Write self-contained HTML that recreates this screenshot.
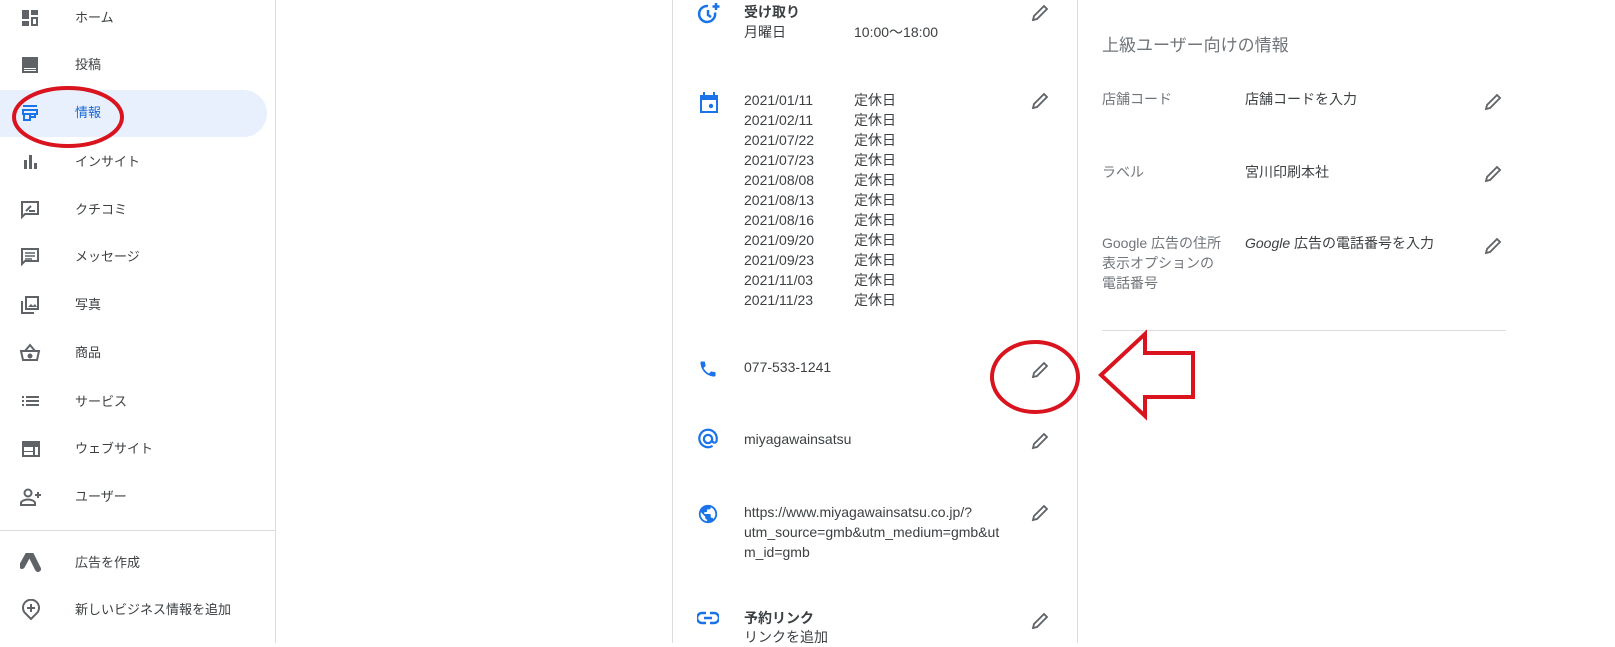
<!DOCTYPE html>
<html><head><meta charset="utf-8"><style>
body{margin:0;width:1615px;height:643px;overflow:hidden;background:#fff;font-family:"Liberation Sans","Noto Sans CJK JP",sans-serif;color:#3c4043;position:relative}
.a{position:absolute;white-space:nowrap}
.nav{font-size:13px;color:#3c4043;left:75px;line-height:16px}
.ic{position:absolute}
.t{font-size:14px;color:#3c4043;line-height:20px}
.g{color:#70757a}
</style></head><body>
<!-- sidebar -->
<div class="a" style="left:0;top:90px;width:267px;height:47px;background:#e8f0fe;border-radius:0 24px 24px 0"></div>
<div class="a" style="left:275px;top:0;width:1px;height:643px;background:#dadce0"></div>
<div class="a" style="left:0;top:530px;width:275px;height:1px;background:#dadce0"></div>

<svg class="ic" style="left:21px;top:9px" width="18" height="18" viewBox="0 0 18 18" fill="#5f6368"><rect x="1" y="1" width="7" height="9"/><rect x="10" y="1" width="7" height="5"/><rect x="1" y="12" width="7" height="5"/><path d="M10 8h7v9h-7zM12 10v5h3v-5z" fill-rule="evenodd"/></svg>
<div class="a nav" style="top:10px">ホーム</div>
<svg class="ic" style="left:21px;top:56px" width="18" height="18" viewBox="0 0 18 18" fill="#5f6368"><path d="M1 1h16v16H1z M3 12v1h12v-1z M3 14v1h12v-1z" fill-rule="evenodd"/></svg>
<div class="a nav" style="top:57px">投稿</div>
<svg class="ic" style="left:21px;top:104px" width="18" height="18" viewBox="0 0 18 18" fill="none" stroke="#1a73e8" stroke-width="2"><path d="M2 2h14M2 6h14v4H2zM3 10v6h6v-6M9 13h5v-3"/></svg>
<div class="a nav" style="top:105px;color:#1967d2">情報</div>
<svg class="ic" style="left:23px;top:154px" width="16" height="16" viewBox="0 0 16 16" fill="#5f6368"><rect x="1" y="6" width="3" height="9"/><rect x="6" y="1" width="3" height="14"/><rect x="11" y="9" width="3" height="6"/></svg>
<div class="a nav" style="top:154px">インサイト</div>
<svg class="ic" style="left:20px;top:200px" width="20" height="20" viewBox="0 0 20 20" fill="none" stroke="#5f6368" stroke-width="2"><path d="M2 2h16v12H5l-3 3z"/><path d="M6 11l5-5M9 11h6" /></svg>
<div class="a nav" style="top:202px">クチコミ</div>
<svg class="ic" style="left:20px;top:247px" width="20" height="20" viewBox="0 0 20 20" fill="none" stroke="#5f6368" stroke-width="2"><path d="M2 2h16v12H5l-3 3z"/><path d="M5 6h10M5 9h10M5 12h7" stroke-width="1.5"/></svg>
<div class="a nav" style="top:249px">メッセージ</div>
<svg class="ic" style="left:20px;top:295px" width="20" height="20" viewBox="0 0 20 20" fill="none" stroke="#5f6368" stroke-width="2"><path d="M6 2h12v12H6zM2 6v12h12"/><path d="M8 12l3-3 2 2 2-2 2 3z" fill="#5f6368" stroke="none"/></svg>
<div class="a nav" style="top:297px">写真</div>
<svg class="ic" style="left:19px;top:343px" width="22" height="20" viewBox="0 0 22 20" fill="none" stroke="#5f6368" stroke-width="2"><path d="M6 8l5-6 5 6M2 8h18l-2 9H4z"/><circle cx="11" cy="13" r="1.5" fill="#5f6368"/></svg>
<div class="a nav" style="top:345px">商品</div>
<svg class="ic" style="left:21px;top:393px" width="20" height="16" viewBox="0 0 20 16" fill="#5f6368"><rect x="1" y="3" width="2" height="2"/><rect x="5" y="3" width="13" height="2"/><rect x="1" y="7" width="2" height="2"/><rect x="5" y="7" width="13" height="2"/><rect x="1" y="11" width="2" height="2"/><rect x="5" y="11" width="13" height="2"/></svg>
<div class="a nav" style="top:394px">サービス</div>
<svg class="ic" style="left:21px;top:440px" width="20" height="18" viewBox="0 0 20 18" fill="#5f6368"><path d="M1 1h18v16H1z M3 7v8h9V7z M14 7v8h3V7z M3 11h9v1H3z" fill-rule="evenodd"/></svg>
<div class="a nav" style="top:441px">ウェブサイト</div>
<svg class="ic" style="left:19px;top:487px" width="24" height="20" viewBox="0 0 24 20" fill="none" stroke="#5f6368" stroke-width="2"><circle cx="9" cy="6" r="3.5"/><path d="M2 18v-2c0-2 4-3.5 7-3.5s7 1.5 7 3.5v2z"/><path d="M19 5v6M16 8h6"/></svg>
<div class="a nav" style="top:489px">ユーザー</div>
<svg class="ic" style="left:20px;top:553px" width="22" height="20" viewBox="0 0 22 20"><path d="M8 2l-6 11" stroke="#5f6368" stroke-width="6" stroke-linecap="round"/><path d="M11 2l7 14" stroke="#5f6368" stroke-width="6" stroke-linecap="round"/></svg>
<div class="a nav" style="top:555px">広告を作成</div>
<svg class="ic" style="left:21px;top:599px" width="20" height="22" viewBox="0 0 20 22" fill="none" stroke="#5f6368" stroke-width="2"><path d="M10 20l-6-6a8 8 0 1 1 12 0z"/><path d="M10 5v8M6 9h8"/></svg>
<div class="a nav" style="top:602px">新しいビジネス情報を追加</div>
<svg class="a" style="left:8px;top:82px" width="120" height="70"><ellipse cx="60" cy="35" rx="54" ry="29" fill="none" stroke="#d9141e" stroke-width="4"/></svg>

<!-- center card -->
<div class="a" style="left:672px;top:0;width:1px;height:643px;background:#dadce0"></div>
<div class="a" style="left:1077px;top:0;width:1px;height:643px;background:#dadce0"></div>

<svg class="ic" style="left:697px;top:2px" width="24" height="24" viewBox="0 0 24 24" fill="none" stroke="#1a73e8" stroke-width="2.5"><path d="M18 10.5A8 8 0 1 1 11 4"/><path d="M11 8v5l3 2"/><path d="M19 1v7M15.5 4.5h7"/></svg>
<div class="a t" style="left:744px;top:2px;font-weight:bold">受け取り</div>
<div class="a t" style="left:744px;top:22px">月曜日</div>
<div class="a t" style="left:854px;top:22px">10:00～18:00</div>

<svg class="ic" style="left:699px;top:92px" width="20" height="22" viewBox="0 0 20 22" fill="#1a73e8"><path d="M4 0h2v3H4zM14 0h2v3h-2zM1 3h18v18H1z M3 8v11h14V8z" fill-rule="evenodd"/><circle cx="12" cy="14" r="2.2"/></svg>
<div class="a t" style="left:744px;top:90px">2021/01/11<br>2021/02/11<br>2021/07/22<br>2021/07/23<br>2021/08/08<br>2021/08/13<br>2021/08/16<br>2021/09/20<br>2021/09/23<br>2021/11/03<br>2021/11/23</div>
<div class="a t" style="left:854px;top:90px">定休日<br>定休日<br>定休日<br>定休日<br>定休日<br>定休日<br>定休日<br>定休日<br>定休日<br>定休日<br>定休日</div>

<svg class="ic" style="left:698px;top:359px" width="20" height="20" viewBox="0 0 24 24" fill="#1a73e8"><path d="M6.6 10.8c1.4 2.8 3.8 5.1 6.6 6.6l2.2-2.2c.3-.3.7-.4 1-.2 1.1.4 2.3.6 3.6.6.6 0 1 .4 1 1V20c0 .6-.4 1-1 1C10.6 21 3 13.4 3 4c0-.6.4-1 1-1h3.5c.6 0 1 .4 1 1 0 1.3.2 2.5.6 3.6.1.3 0 .7-.2 1z"/></svg>
<div class="a t" style="left:744px;top:357px">077-533-1241</div>

<svg class="ic" style="left:697px;top:428px" width="22" height="22" viewBox="0 0 24 24" fill="none" stroke="#1a73e8" stroke-width="2.4"><path d="M17 19.5A9.5 9.5 0 1 1 21.5 12v1.5a2.5 2.5 0 0 1-5 0V12"/><circle cx="12" cy="12" r="4.5"/></svg>
<div class="a t" style="left:744px;top:429px">miyagawainsatsu</div>

<svg class="ic" style="left:697px;top:503px" width="22" height="22" viewBox="0 0 24 24" fill="#1a73e8"><path d="M12 2a10 10 0 1 0 0 20 10 10 0 0 0 0-20zM11 19.9A8 8 0 0 1 4.2 10L9 15v1a2 2 0 0 0 2 2zm6.9-2.5A2 2 0 0 0 16 16h-1v-3a1 1 0 0 0-1-1H8v-2h2a1 1 0 0 0 1-1V7h2a2 2 0 0 0 2-2v-.4a8 8 0 0 1 2.9 12.8z"/></svg>
<div class="a t" style="left:744px;top:502px">https://www.miyagawainsatsu.co.jp/?<br>utm_source=gmb&amp;utm_medium=gmb&amp;ut<br>m_id=gmb</div>

<svg class="ic" style="left:697px;top:611px" width="22" height="14" viewBox="0 0 22 14" fill="none" stroke="#1a73e8" stroke-width="2.4"><path d="M9 2H5a5 5 0 0 0 0 10h4M13 2h4a5 5 0 0 1 0 10h-4M7 7h8"/></svg>
<div class="a t" style="left:744px;top:608px;font-weight:bold">予約リンク</div>
<div class="a t" style="left:744px;top:627px">リンクを追加</div>

<!-- pencils center -->
<svg class="ic" style="left:1031px;top:4px" width="18" height="18" viewBox="0 0 18 18" fill="none" stroke="#5f6368" stroke-width="1.8"><path d="M2 16l1-4L13 2l3 3L6 15z"/></svg>
<svg class="ic" style="left:1031px;top:92px" width="18" height="18" viewBox="0 0 18 18" fill="none" stroke="#5f6368" stroke-width="1.8"><path d="M2 16l1-4L13 2l3 3L6 15z"/></svg>
<svg class="ic" style="left:1031px;top:361px" width="18" height="18" viewBox="0 0 18 18" fill="none" stroke="#5f6368" stroke-width="1.8"><path d="M2 16l1-4L13 2l3 3L6 15z"/></svg>
<svg class="ic" style="left:1031px;top:432px" width="18" height="18" viewBox="0 0 18 18" fill="none" stroke="#5f6368" stroke-width="1.8"><path d="M2 16l1-4L13 2l3 3L6 15z"/></svg>
<svg class="ic" style="left:1031px;top:504px" width="18" height="18" viewBox="0 0 18 18" fill="none" stroke="#5f6368" stroke-width="1.8"><path d="M2 16l1-4L13 2l3 3L6 15z"/></svg>
<svg class="ic" style="left:1031px;top:612px" width="18" height="18" viewBox="0 0 18 18" fill="none" stroke="#5f6368" stroke-width="1.8"><path d="M2 16l1-4L13 2l3 3L6 15z"/></svg>

<!-- right panel -->
<div class="a g" style="left:1102px;top:31px;font-size:17px">上級ユーザー向けの情報</div>
<div class="a t g" style="left:1102px;top:89px">店舗コード</div>
<div class="a t" style="left:1245px;top:89px">店舗コードを入力</div>
<div class="a t g" style="left:1102px;top:162px">ラベル</div>
<div class="a t" style="left:1245px;top:162px">宮川印刷本社</div>
<div class="a t g" style="left:1102px;top:233px">Google 広告の住所<br>表示オプションの<br>電話番号</div>
<div class="a t" style="left:1245px;top:233px"><i>Google</i> 広告の電話番号を入力</div>
<div class="a" style="left:1102px;top:330px;width:404px;height:1px;background:#dadce0"></div>
<svg class="ic" style="left:1484px;top:93px" width="18" height="18" viewBox="0 0 18 18" fill="none" stroke="#5f6368" stroke-width="1.8"><path d="M2 16l1-4L13 2l3 3L6 15z"/></svg>
<svg class="ic" style="left:1484px;top:165px" width="18" height="18" viewBox="0 0 18 18" fill="none" stroke="#5f6368" stroke-width="1.8"><path d="M2 16l1-4L13 2l3 3L6 15z"/></svg>
<svg class="ic" style="left:1484px;top:237px" width="18" height="18" viewBox="0 0 18 18" fill="none" stroke="#5f6368" stroke-width="1.8"><path d="M2 16l1-4L13 2l3 3L6 15z"/></svg>

<!-- annotations -->
<svg class="a" style="left:0;top:0" width="1615" height="643">
<ellipse cx="1035" cy="377" rx="43" ry="35" fill="none" stroke="#d9141e" stroke-width="4"/>
<path d="M1101 375L1145 334V353H1193V397H1145V416Z" fill="none" stroke="#d9141e" stroke-width="4" stroke-linejoin="miter"/>
</svg>
</body></html>
